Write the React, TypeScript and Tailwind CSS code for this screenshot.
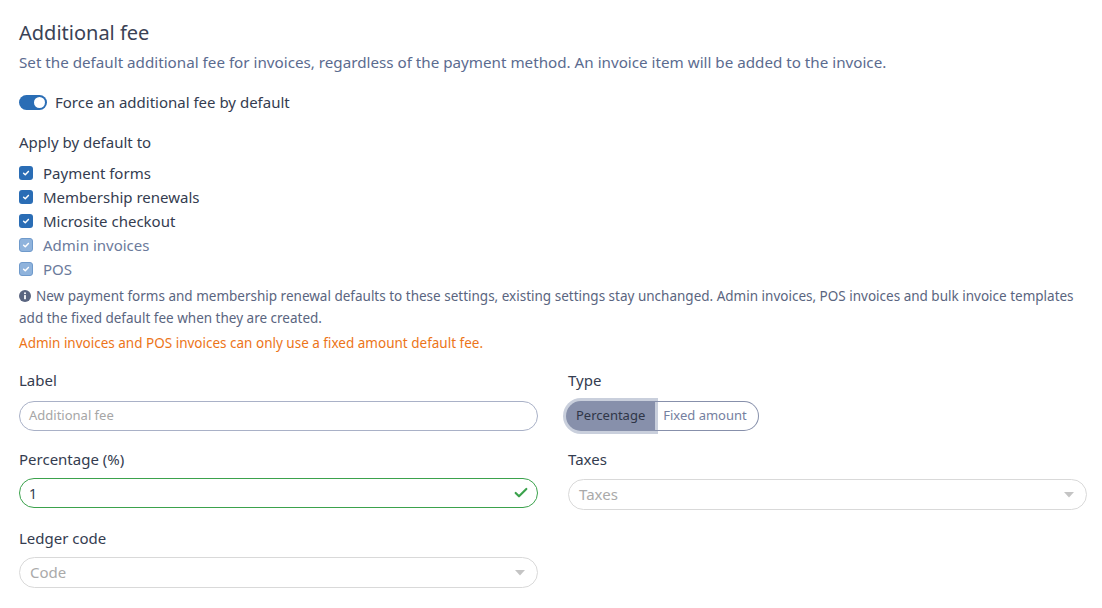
import { Check } from 'lucide-react';

const font = { fontFamily: '"Noto Sans", Lato, sans-serif' };

type Item = { label: string; disabled?: boolean };

const items: Item[] = [
  { label: 'Payment forms' },
  { label: 'Membership renewals' },
  { label: 'Microsite checkout' },
  { label: 'Admin invoices', disabled: true },
  { label: 'POS', disabled: true },
];

function CheckBox({ item }: { item: Item }) {
  return (
    <label className="flex items-center gap-[10px] h-6">
      <span
        className={
          item.disabled
            ? 'flex items-center justify-center w-[14px] h-[14px] rounded-[3px] bg-[#8fb3dc] border border-[#6f9acb]'
            : 'flex items-center justify-center w-[14px] h-[14px] rounded-[3px] bg-[#2a6db5]'
        }
      >
        <svg viewBox="0 0 10 10" className="w-[8px] h-[8px]">
          <path d="M2 5.2 L4.1 7.2 L8 3" fill="none" stroke="white" strokeWidth="1.8" strokeLinecap="round" strokeLinejoin="round" />
        </svg>
      </span>
      <span className={item.disabled ? 'text-[15px] text-[#6b7a9b]' : 'text-[15px] text-[#343c50]'}>{item.label}</span>
    </label>
  );
}

function Caret() {
  return (
    <svg viewBox="0 0 10 6" className="w-[10px] h-[6px]">
      <path d="M0 0 L10 0 L5 5.5 Z" fill="#c4c4c4" />
    </svg>
  );
}

function InfoIcon() {
  return (
    <svg viewBox="0 0 12 12" className="inline-block w-[12px] h-[12px] mr-[5px] align-[-1px]">
      <circle cx="6" cy="6" r="6" fill="#5a6580" />
      <circle cx="6" cy="3.3" r="1" fill="white" />
      <rect x="5.1" y="5" width="1.8" height="4.3" rx="0.5" fill="white" />
    </svg>
  );
}

export default function App() {
  return (
    <div className="min-h-screen bg-white pl-[19px] pr-[15px] pt-[20px]" style={font}>
      <h2 className="text-[20px] leading-[26px] text-[#3a4255]">Additional fee</h2>
      <p className="mt-[5px] text-[15.2px] leading-[22px] text-[#5b6b8f]">
        Set the default additional fee for invoices, regardless of the payment method. An invoice item will be added to the invoice.
      </p>

      <div className="mt-[18px] flex items-center gap-[8px] h-[22px]">
        <span className="relative w-[28px] h-[15px] rounded-full bg-[#2a6db5]">
          <span className="absolute right-[2px] top-[2px] w-[11px] h-[11px] rounded-full bg-white" />
        </span>
        <span className="text-[15px] text-[#343c50]">Force an additional fee by default</span>
      </div>

      <div className="mt-[18px] text-[15px] leading-[22px] text-[#343c50]">Apply by default to</div>

      <div className="mt-[8px] flex flex-col">
        {items.map((it) => (
          <CheckBox key={it.label} item={it} />
        ))}
      </div>

      <p className="mt-[4px] text-[13.5px] leading-[22px] text-[#5a6580]">
        <InfoIcon />
        New payment forms and membership renewal defaults to these settings, existing settings stay unchanged. Admin invoices, POS invoices and bulk invoice templates
        <br />
        add the fixed default fee when they are created.
      </p>
      <p className="mt-[3px] text-[13.5px] leading-[22px] text-[#ec7418]">
        Admin invoices and POS invoices can only use a fixed amount default fee.
      </p>

      <div className="mt-[15px] grid grid-cols-2 gap-x-[30px] gap-y-[17px]">
        <div>
          <div className="text-[15px] leading-[22px] text-[#343c50]">Label</div>
          <div className="mt-[10px] h-[30px] rounded-full border border-[#a9b1c7] px-[9px] flex items-center text-[13px] text-[#a6a6a6]">
            Additional fee
          </div>
        </div>
        <div>
          <div className="text-[15px] leading-[22px] text-[#343c50]">Type</div>
          <div className="mt-[10px] flex h-[30px] w-fit">
            <button className="h-[30px] pl-[10px] pr-[10px] rounded-l-full bg-[#8790ab] text-[13px] text-[#2f3648] ring-[3px] ring-[#c9cfdc] -ml-[2px]">
              Percentage
            </button>
            <button className="h-[30px] pl-[8px] pr-[11px] rounded-r-full border border-l-0 border-[#8790ab] text-[13px] text-[#7580a0]">
              Fixed amount
            </button>
          </div>
        </div>

        <div>
          <div className="text-[15px] leading-[22px] text-[#343c50]">Percentage (%)</div>
          <div className="mt-[8px] h-[30px] rounded-full border border-[#3ba24c] pl-[9px] pr-[8px] flex items-center justify-between text-[14px] text-[#343c50]">
            <span>1</span>
            <Check className="w-[16px] h-[16px] text-[#3ba24c]" strokeWidth={3.2} />
          </div>
        </div>
        <div>
          <div className="text-[15px] leading-[22px] text-[#343c50]">Taxes</div>
          <div className="mt-[9px] h-[31px] rounded-full border border-[#d9d9d9] pl-[10px] pr-[12px] flex items-center justify-between text-[15px] text-[#aaaaaa]">
            <span>Taxes</span>
            <Caret />
          </div>
        </div>

        <div>
          <div className="text-[15px] leading-[22px] text-[#343c50]">Ledger code</div>
          <div className="mt-[8px] h-[31px] rounded-full border border-[#d9d9d9] pl-[10px] pr-[12px] flex items-center justify-between text-[15px] text-[#aaaaaa]">
            <span>Code</span>
            <Caret />
          </div>
        </div>
      </div>
    </div>
  );
}
